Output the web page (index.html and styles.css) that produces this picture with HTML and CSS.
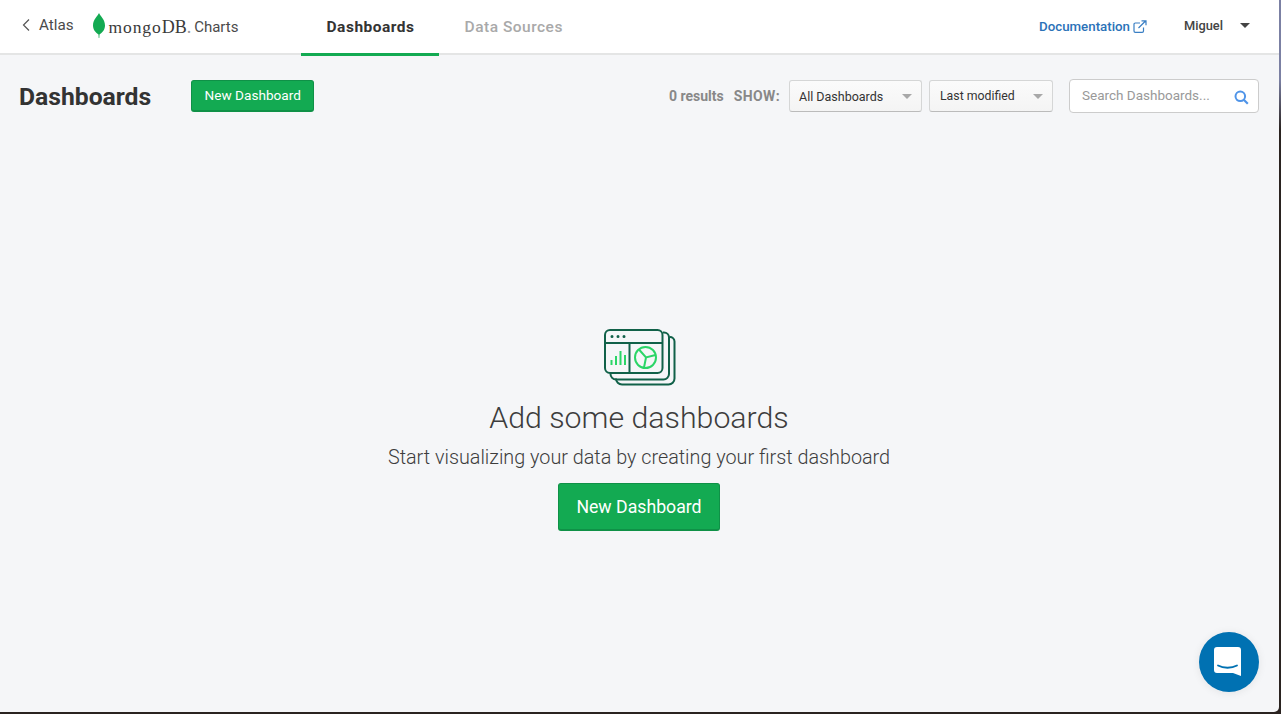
FILE: index.html
```html
<!DOCTYPE html>
<html lang="en">
<head>
  <meta charset="UTF-8" />
  <title>Dashboards | MongoDB Charts</title>
  <link rel="stylesheet" href="styles.css">
</head>
<body>

  <header class="topbar">
    <a class="back-link" href="#">
      <svg class="back-icon" width="8" height="14" viewBox="0 0 8 14"><path d="M7 1.500 1.500 7 7 12.500" fill="none" stroke="#555" stroke-width="1.200"/></svg>
      Atlas
    </a>
    <div class="logo">
      <svg class="leaf" width="12" height="26" viewBox="0 0 12 26"><path d="M6 0C7 2.500 12 6.500 12 12.500 12 17 9 19.800 6.500 21.500L6.300 25H5.700L5.500 21.500C3 19.800 0 17 0 12.500 0 6.500 5 2.500 6 0Z" fill="#13aa52"/></svg>
      <span class="wordmark"><span class="wordmark-mongo">mongo</span>DB<span class="wordmark-dot">.</span></span>
      <span class="product">Charts</span>
    </div>
    <nav class="tabs">
      <a class="tab tab-active" href="#">Dashboards</a>
      <a class="tab" href="#">Data Sources</a>
    </nav>
    <a class="docs-link" href="#">
      Documentation
      <svg width="14" height="13" viewBox="0 0 14 13"><path d="M10.500 7.500V11a1.300 1.300 0 0 1-1.300 1.300H2.300A1.300 1.300 0 0 1 1 11V4.300A1.300 1.300 0 0 1 2.300 3H7M5.500 8 12.500 1M8.500 .8H13V5.300" fill="none" stroke="#3a7fc4" stroke-width="1.200"/></svg>
    </a>
    <div class="user-menu">
      <span>Miguel</span>
      <span class="caret caret-dark"></span>
    </div>
  </header>

  <main class="content">
    <div class="toolbar">
      <h1 class="page-title">Dashboards</h1>
      <button class="btn btn-small">New Dashboard</button>
      <div class="filters">
        <span class="results">0 results</span>
        <span class="show-label">SHOW:</span>
        <div class="select select-type"><span>All Dashboards</span><span class="caret"></span></div>
        <div class="select select-sort"><span>Last modified</span><span class="caret"></span></div>
        <div class="search">
          <span class="search-text">Search Dashboards...</span>
          <svg class="search-icon" width="15" height="15" viewBox="0 0 15 15"><circle cx="6.300" cy="6.300" r="4.800" fill="none" stroke="#4f94e8" stroke-width="2"/><path d="M9.800 9.800 13.800 13.800" stroke="#4f94e8" stroke-width="2.200"/></svg>
        </div>
      </div>
    </div>

    <section class="empty">
      <svg class="empty-icon" width="72" height="57" viewBox="0 0 72 57" fill="none">
        <path d="M65.500 8a4.500 4.500 0 0 1 5 4.500v37a6 6 0 0 1-6 6H18a6 6 0 0 1-6-6" stroke="#116149" stroke-width="2"/>
        <path d="M59 3.500h1a5 5 0 0 1 5 5V45a5.500 5.500 0 0 1-5.500 5.500H12A5.500 5.500 0 0 1 6.500 45" stroke="#116149" stroke-width="2"/>
        <rect x="1" y="1" width="57.500" height="43" rx="5" fill="#f5f6f8" stroke="#116149" stroke-width="2"/>
        <path d="M1 14H58.500M25.500 14V44" stroke="#116149" stroke-width="2"/>
        <path d="M8 7.500h.01M14 7.500h.01M20 7.500h.01" stroke="#116149" stroke-width="3" stroke-linecap="round"/>
        <path d="M7.500 36V31M12 36V27M16.500 36V22M21 36V26" stroke="#2bd567" stroke-width="2"/>
        <circle cx="41.500" cy="28.500" r="10.500" stroke="#2bd567" stroke-width="2"/>
        <path d="M35 20.500 42 28.500 51.500 26M42 28.500 40 38.500" stroke="#2bd567" stroke-width="2"/>
      </svg>
      <h2 class="empty-title">Add some dashboards</h2>
      <p class="empty-text">Start visualizing your data by creating your first dashboard</p>
      <button class="btn btn-large">New Dashboard</button>
    </section>

    <button class="chat-launcher" aria-label="Open chat">
      <svg width="30" height="32" viewBox="0 0 30 32"><path d="M3 1h21a3 3 0 0 1 3 3v26l-8-3H3a3 3 0 0 1-3-3V4a3 3 0 0 1 3-3Z" fill="#fff"/><path d="M4 19.500C9.500 22.500 17.500 22.500 23 19.500" fill="none" stroke="#0071b2" stroke-width="1.800" stroke-linecap="round"/></svg>
    </button>
  </main>

</body>
</html>
```

FILE: styles.css
```css
* {
  box-sizing: border-box;
}

/* the desktop behind the window shows along the right and bottom edge */
html {
  height: 100%;
  background: linear-gradient(#7b80a3 80px, #2a2320 130px);
}

body {
  margin: 0;
  width: 1279px;
  height: 712px;
  display: flex;
  flex-direction: column;
  overflow: hidden;
  font-family: 'Roboto', 'Liberation Sans', sans-serif;
  background: #f5f6f8;
  color: #333;
  border-bottom-right-radius: 5px;
}

a {
  text-decoration: none;
  color: inherit;
}

.topbar {
  flex: 0 0 55px;
  display: flex;
  align-items: center;
  background: #fff;
  border-bottom: 2px solid #e4e5e5;
  padding-left: 22px;
}

.back-link {
  display: flex;
  align-items: center;
  gap: 9px;
  font-size: 15.2px;
  color: #4a4a4a;
  margin-top: -3px;
}

.logo {
  display: flex;
  align-items: center;
  margin-left: 19px;
  width: 208px;
}

.leaf {
  margin-top: -2px;
}

.wordmark {
  margin-left: 4px;
  margin-top: 2px;
  font-family: 'Liberation Serif', serif;
  font-size: 18px;
  color: #3a3a3a;
}

.wordmark-mongo {
  font-size: 17.5px;
  letter-spacing: 0.9px;
}

.wordmark-dot {
  color: #999;
}

.product {
  margin-left: 3px;
  margin-top: 1px;
  font-size: 15px;
  color: #4a4a4a;
}

.tabs {
  display: flex;
  align-self: flex-start;
  height: 53px;
}

.tab {
  display: flex;
  align-items: center;
  height: 56px;
  padding: 0 24px 3px 26px;
  font-size: 15.5px;
  font-weight: 500;
  color: #a9a9a9;
  letter-spacing: 0.5px;
}

.tab-active {
  color: #333;
  font-weight: 700;
  border-bottom: 3px solid #13aa52;
  padding-bottom: 0;
}

.docs-link {
  display: flex;
  align-items: center;
  gap: 3px;
  margin-left: auto;
  font-size: 13.3px;
  font-weight: 500;
  color: #2b72b8;
}

.user-menu {
  display: flex;
  align-items: center;
  gap: 17px;
  width: 99px;
  padding-left: 37px;
  font-size: 12.8px;
  font-weight: 500;
  color: #444;
  margin-top: -2px;
  margin-right: 33px;
}

.caret {
  width: 0;
  height: 0;
  border-left: 5px solid transparent;
  border-right: 5px solid transparent;
  border-top: 5px solid #a8a8a8;
}

.caret-dark {
  border-top-color: #444;
}

.content {
  flex: 1;
  position: relative;
  display: flex;
  flex-direction: column;
}

.toolbar {
  display: flex;
  align-items: center;
  height: 33px;
  margin-top: 24px;
  padding: 0 20px 0 19px;
}

.page-title {
  margin: 2px 40px 0 0;
  font-size: 24.7px;
  font-weight: 700;
  color: #333;
}

.btn {
  background: #13aa52;
  color: #fff;
  border: 1px solid #0f9147;
  border-bottom-width: 2px;
  border-radius: 3px;
  font-family: inherit;
  cursor: pointer;
}

.btn-small {
  width: 123px;
  height: 32px;
  font-size: 13.6px;
}

.btn-large {
  width: 162px;
  height: 48px;
  font-size: 17.7px;
  margin-top: 13px;
}

.filters {
  display: flex;
  align-items: center;
  margin-left: auto;
  font-size: 14px;
}

.results,
.show-label {
  font-weight: 700;
  color: #888;
}

.show-label {
  margin-left: 10px;
  letter-spacing: 0.4px;
}

.select {
  display: flex;
  align-items: center;
  justify-content: space-between;
  height: 32px;
  padding: 1px 9px 0 9px;
  background: linear-gradient(#fbfbfb, #f4f4f4);
  border: 1px solid #d5d6d6;
  border-bottom-color: #bbb;
  border-radius: 3px;
  font-size: 12.5px;
  color: #333;
}

.select-type {
  width: 133px;
  margin-left: 9px;
}

.select-sort {
  width: 124px;
  margin-left: 7px;
  padding-left: 10px;
  font-size: 12.3px;
}

.search {
  display: flex;
  align-items: center;
  justify-content: space-between;
  width: 190px;
  height: 34px;
  margin-left: 16px;
  padding: 0 9px 0 12px;
  background: #fff;
  border: 1px solid #ccc;
  border-radius: 4px;
  font-size: 13.5px;
  color: #999;
}

.search-text {
  margin-top: -2px;
}

.search-icon {
  margin-top: 3px;
}

.empty {
  display: flex;
  flex-direction: column;
  align-items: center;
  margin-top: 217px;
  padding-right: 1px;
}

.empty-icon {
  margin-left: 1px;
}

.empty-title {
  margin: 14px 0 0;
  font-size: 30.3px;
  line-height: 35px;
  font-weight: 300;
  color: #3d3d3d;
}

.empty-text {
  margin: 11px 0 0;
  font-size: 19.8px;
  line-height: 24px;
  font-weight: 300;
  color: #3d3d3d;
}

.chat-launcher {
  position: absolute;
  right: 20px;
  bottom: 20px;
  width: 60px;
  height: 60px;
  display: flex;
  align-items: center;
  justify-content: center;
  padding: 0;
  background: #0071b2;
  border: none;
  border-radius: 50%;
  box-shadow: 0 1px 8px rgba(0, 0, 0, 0.08);
}
```
